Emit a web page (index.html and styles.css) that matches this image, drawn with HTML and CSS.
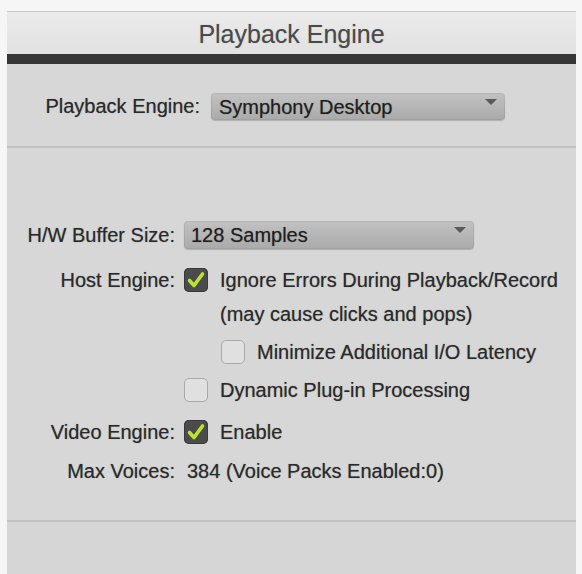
FILE: index.html
```html
<!DOCTYPE html>
<html>
<head>
<meta charset="utf-8">
<link rel="stylesheet" href="styles.css">
</head>
<body>
<div class="panel">
  <div class="titlebar">Playback Engine</div>
  <div class="darkbar"></div>
  <div class="section top">
    <div class="row engine-row">
      <span class="label engine-label">Playback Engine:</span>
      <div class="select engine-select">Symphony Desktop<span class="arrow"></span></div>
    </div>
  </div>
  <div class="section main">
    <div class="row buffer-row">
      <span class="label">H/W Buffer Size:</span>
      <div class="select buffer-select">128 Samples<span class="arrow"></span></div>
    </div>
    <div class="row host-row">
      <span class="label">Host Engine:</span>
      <span class="check on"><svg viewBox="0 0 24 24" width="24" height="24"><path d="M5.5 12.5 L10 17.5 L18.5 6" fill="none" stroke="#b8e62e" stroke-width="3.6" stroke-linecap="round" stroke-linejoin="round"/></svg></span>
      <span class="text">Ignore Errors During Playback/Record</span>
    </div>
    <div class="row note-row">
      <span class="label"></span>
      <span class="text indent">(may cause clicks and pops)</span>
    </div>
    <div class="row minimize-row">
      <span class="label"></span>
      <span class="check off sub"></span>
      <span class="text">Minimize Additional I/O Latency</span>
    </div>
    <div class="row dynamic-row">
      <span class="label"></span>
      <span class="check off"></span>
      <span class="text">Dynamic Plug-in Processing</span>
    </div>
    <div class="row video-row">
      <span class="label">Video Engine:</span>
      <span class="check on"><svg viewBox="0 0 24 24" width="24" height="24"><path d="M5.5 12.5 L10 17.5 L18.5 6" fill="none" stroke="#b8e62e" stroke-width="3.6" stroke-linecap="round" stroke-linejoin="round"/></svg></span>
      <span class="text">Enable</span>
    </div>
    <div class="row voices-row">
      <span class="label">Max Voices:</span>
      <span class="text value">384 (Voice Packs Enabled:0)</span>
    </div>
  </div>
  <div class="section footer"></div>
</div>
</body>
</html>
```
FILE: styles.css
```css
html, body {
  margin: 0;
  padding: 0;
  background: #f6f6f6;
}
body {
  font-family: "Liberation Sans", Arial, Helvetica, sans-serif;
  color: #2a2a2a;
  width: 582px;
  height: 574px;
  overflow: hidden;
}
.panel {
  margin: 11px 0 0 7px;
  width: 569px;
  background: #d7d7d7;
  display: flex;
  flex-direction: column;
  height: 563px;
}
.titlebar {
  height: 42px;
  border-top: 1px solid #c4c4c4;
  background: linear-gradient(#ebebeb, #e1e1e1);
  text-align: center;
  font-size: 25px;
  line-height: 44px;
  color: #4a4a4a;
  text-shadow: 0 0 1px rgba(0, 0, 0, 0.25);
}
.darkbar {
  height: 10px;
  background: #363636;
}
.section.top {
  height: 82px;
  border-bottom: 2px solid #c2c2c2;
  display: flex;
  align-items: center;
}
.row {
  display: flex;
  align-items: center;
  font-size: 20px;
  text-shadow: 0 0 1px rgba(0, 0, 0, 0.4);
}
.label {
  width: 168px;
  flex: none;
  text-align: right;
  white-space: nowrap;
}
.engine-row {
  margin-top: 2px;
}
.engine-label {
  width: 193px;
}
.select {
  position: relative;
  height: 27px;
  line-height: 28px;
  box-sizing: border-box;
  border-radius: 4px;
  background: linear-gradient(#c2c2c2, #aaaaaa);
  box-shadow: 0 1px 1px rgba(0, 0, 0, 0.18), inset 0 0 0 1px rgba(0, 0, 0, 0.06);
  padding-left: 8px;
  color: #1e1e1e;
}
.engine-select {
  margin-left: 11px;
  width: 294px;
}
.buffer-select {
  margin-left: 9px;
  width: 290px;
  height: 28px;
  padding-left: 7px;
}
.arrow {
  position: absolute;
  right: 8px;
  top: 6px;
  width: 0;
  height: 0;
  border-left: 6px solid transparent;
  border-right: 6px solid transparent;
  border-top: 6px solid #5a5a5a;
}
.section.main {
  height: 374px;
  border-bottom: 2px solid #c2c2c2;
  display: flex;
  flex-direction: column;
  padding-top: 73px;
  box-sizing: border-box;
}
.check {
  flex: none;
  width: 24px;
  height: 24px;
  box-sizing: border-box;
  border-radius: 5px;
  margin-left: 9px;
  margin-right: 12px;
}
.check svg {
  display: block;
}
.check.on {
  background: #4b4b4b;
  box-shadow: inset 0 0 0 1px #3a3a3a;
}
.check.off {
  background: #e0e0e0;
  border: 1px solid #a9a9a9;
}
.check.sub {
  margin-left: 46px;
}
.indent {
  margin-left: 45px;
}
.host-row {
  height: 38px;
  margin-top: 12px;
}
.note-row {
  height: 30px;
}
.minimize-row {
  height: 38px;
  margin-top: 4px;
}
.dynamic-row {
  height: 38px;
}
.video-row {
  height: 38px;
  margin-top: 4px;
}
.voices-row {
  height: 38px;
  margin-top: 1px;
}
.value {
  margin-left: 12px;
}
.section.footer {
  flex: 1;
  background: #d6d6d6;
}
```
